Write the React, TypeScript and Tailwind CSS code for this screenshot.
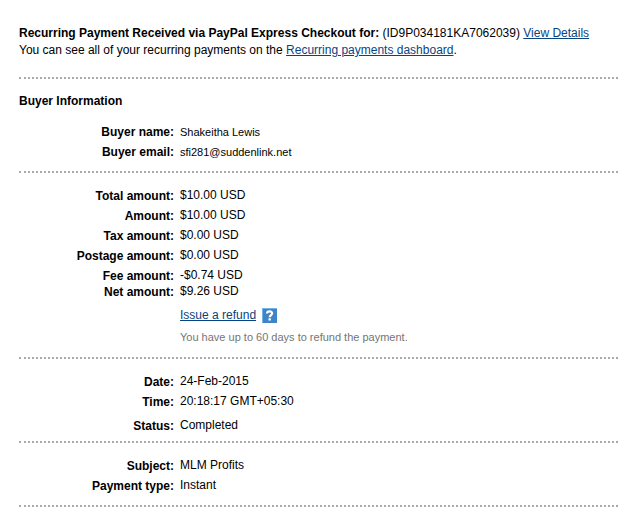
import type { ReactNode } from "react";

type RowProps = {
  label: string;
  children: ReactNode;
  className?: string;
};

function Row({ label, children, className = "" }: RowProps) {
  return (
    <div className={`flex gap-1.5 ${className}`}>
      <dt className="w-[155px] shrink-0 text-right font-bold leading-[18px]">
        {label}:
      </dt>
      <dd className="leading-4">{children}</dd>
    </div>
  );
}

function Divider() {
  return <hr className="border-t-2 border-dotted border-[#a9a9a9]" />;
}

function HelpIcon() {
  return (
    <svg viewBox="0 0 15 15" className="size-[15px]" aria-hidden="true">
      <rect width="15" height="15" fill="#73b3e6" />
      <rect x="1" y="1" width="14" height="14" fill="#3f83c9" />
      <path
        d="M5 5.5C5 2.7 10.2 2.6 10.2 5.3C10.2 7.1 7.7 7 7.7 9.2"
        fill="none"
        stroke="#fff"
        strokeWidth="2.2"
      />
      <rect x="6.5" y="10.3" width="2.4" height="2.2" fill="#fff" />
    </svg>
  );
}

export default function App() {
  return (
    <main className="min-h-screen bg-white pr-3 pb-5 pl-[19px] pt-[25px] font-['Liberation_Sans',Arial,sans-serif] text-xs text-black">
      <div className="pb-[18px] leading-[17px]">
        <p>
          <strong>
            Recurring Payment Received via PayPal Express Checkout for:
          </strong>{" "}
          (ID9P034181KA7062039){" "}
          <a href="#details" className="text-[#084482] underline">
            View Details
          </a>
        </p>
        <p>
          You can see all of your recurring payments on the{" "}
          <a href="#dashboard" className="text-[#084482] underline">
            Recurring payments dashboard
          </a>
          .
        </p>
      </div>

      <Divider />
      <section className="pt-3.5 pb-2.5">
        <h2 className="font-bold leading-4">Buyer Information</h2>
        <dl className="mt-3.5 space-y-0.5">
          <Row label="Buyer name">
            <span className="text-[11px] leading-[18px]">Shakeitha Lewis</span>
          </Row>
          <Row label="Buyer email">
            <span className="text-[11px] leading-[18px]">
              sfi281@suddenlink.net
            </span>
          </Row>
        </dl>
      </section>

      <Divider />
      <section className="pt-3.5 pb-3">
        <dl className="space-y-0.5">
          <Row label="Total amount">$10.00 USD</Row>
          <Row label="Amount">$10.00 USD</Row>
          <Row label="Tax amount">$0.00 USD</Row>
          <Row label="Postage amount">$0.00 USD</Row>
          <Row label="Fee amount" className="h-3.5">
            -$0.74 USD
          </Row>
          <Row label="Net amount">$9.26 USD</Row>
        </dl>
        <div className="ml-[161px]">
          <div className="mt-1.5 flex items-center gap-1.5 leading-4">
            <a href="#refund" className="text-[#084482] underline">
              Issue a refund
            </a>
            <button type="button" aria-label="Refund help">
              <HelpIcon />
            </button>
          </div>
          <p className="mt-1.5 text-[11px] leading-4 text-[#757575]">
            You have up to 60 days to refund the payment.
          </p>
        </div>
      </section>

      <Divider />
      <section className="pt-3.5 pb-1.5">
        <dl className="space-y-0.5">
          <Row label="Date">24-Feb-2015</Row>
          <Row label="Time">20:18:17 GMT+05:30</Row>
          <Row label="Status" className="pt-1">
            Completed
          </Row>
        </dl>
      </section>

      <Divider />
      <section className="pt-3.5 pb-2.5">
        <dl className="space-y-0.5">
          <Row label="Subject">MLM Profits</Row>
          <Row label="Payment type">Instant</Row>
        </dl>
      </section>
      <Divider />
    </main>
  );
}
